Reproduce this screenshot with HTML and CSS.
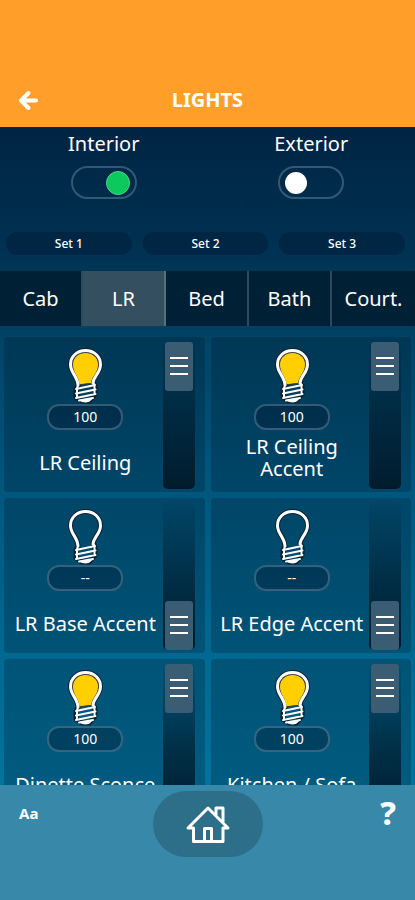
FILE: index.html
```
<!DOCTYPE html>
<html lang="en">
<head>
    <meta charset="UTF-8">
    <meta name="viewport" content="width=device-width, initial-scale=1.0">
    <title>Lights</title>
    <link rel="stylesheet" href="styles.css">
</head>
<body>
    <svg class="sprite" aria-hidden="true">
        <symbol id="bulb" viewBox="0 0 36 56">
            <g fill="none" stroke-linecap="round" stroke-linejoin="round">
                <path stroke="#0b2233" stroke-width="5" d="M11 37 C10.500 28 3.500 25 3.500 16.500 C3.500 8.500 10 2.500 18.500 2.500 C27 2.500 33.500 8.500 33.500 16.500 C33.500 25 26.500 28 26 35 L28 38 V46 L22 53 H15 L9 49 V41 Z"/>
                <path class="glass" d="M12 36.500 C11.500 28 5.500 25 5.500 16.500 C5.500 9.500 11.500 4.500 18.500 4.500 C25.500 4.500 31.500 9.500 31.500 16.500 C31.500 25 25 28 24.500 35 Z"/>
                <path stroke="#fff" stroke-width="3" d="M11 37 C10.500 28 3.500 25 3.500 16.500 C3.500 8.500 10 2.500 18.500 2.500 C27 2.500 33.500 8.500 33.500 16.500 C33.500 25 26.500 28 26 35"/>
                <path stroke="#fff" stroke-width="2" d="M9 41 L28 37 M9 45.500 L28.500 41.500 M9 50 L28.500 46 M12 52.500 L26 50 M11 37 L10 40 M26 35 L28 37 M10 41 V49 M27.500 38 V46"/>
                <path fill="#fff" stroke="#fff" d="M13 52.500 L25 50.500 Q23 54 19 54 Q15 54 13 52.500 Z"/>
            </g>
        </symbol>
    </svg>

    <div class="app">
        <header class="header">
            <button class="back" type="button" aria-label="Back">
                <svg width="22" height="22" viewBox="0 0 22 22" fill="none" stroke="currentColor" stroke-width="4" stroke-linecap="round" stroke-linejoin="round">
                    <path d="M11.500 4 L4 11.500 L11.500 19 M5 11.500 H19"/>
                </svg>
            </button>
            <h1>LIGHTS</h1>
        </header>

        <main class="content">
            <div class="switches">
                <label class="switch">
                    Interior
                    <input type="checkbox" checked>
                </label>
                <label class="switch">
                    Exterior
                    <input type="checkbox">
                </label>
            </div>

            <div class="sets">
                <button type="button">Set 1</button>
                <button type="button">Set 2</button>
                <button type="button">Set 3</button>
            </div>

            <nav class="tabs">
                <button type="button">Cab</button>
                <button type="button" class="active">LR</button>
                <button type="button">Bed</button>
                <button type="button">Bath</button>
                <button type="button">Court.</button>
            </nav>

            <div class="lights">
                <section class="card on">
                    <div class="info">
                        <svg class="bulb"><use href="#bulb"/></svg>
                        <output class="level">100</output>
                        <label class="name" for="light1">LR Ceiling</label>
                    </div>
                    <input class="dimmer" id="light1" type="range" min="0" max="100" value="100">
                </section>
                <section class="card on">
                    <div class="info">
                        <svg class="bulb"><use href="#bulb"/></svg>
                        <output class="level">100</output>
                        <label class="name two-line" for="light2">LR Ceiling Accent</label>
                    </div>
                    <input class="dimmer" id="light2" type="range" min="0" max="100" value="100">
                </section>
                <section class="card">
                    <div class="info">
                        <svg class="bulb"><use href="#bulb"/></svg>
                        <output class="level">--</output>
                        <label class="name" for="light3">LR Base Accent</label>
                    </div>
                    <input class="dimmer" id="light3" type="range" min="0" max="100" value="0">
                </section>
                <section class="card">
                    <div class="info">
                        <svg class="bulb"><use href="#bulb"/></svg>
                        <output class="level">--</output>
                        <label class="name" for="light4">LR Edge Accent</label>
                    </div>
                    <input class="dimmer" id="light4" type="range" min="0" max="100" value="0">
                </section>
                <section class="card on">
                    <div class="info">
                        <svg class="bulb"><use href="#bulb"/></svg>
                        <output class="level">100</output>
                        <label class="name" for="light5">Dinette Sconce</label>
                    </div>
                    <input class="dimmer" id="light5" type="range" min="0" max="100" value="100">
                </section>
                <section class="card on">
                    <div class="info">
                        <svg class="bulb"><use href="#bulb"/></svg>
                        <output class="level">100</output>
                        <label class="name" for="light6">Kitchen / Sofa</label>
                    </div>
                    <input class="dimmer" id="light6" type="range" min="0" max="100" value="100">
                </section>
            </div>
        </main>

        <footer class="footer">
            <button class="text-size" type="button" aria-label="Text size">Aa</button>
            <button class="home" type="button" aria-label="Home">
                <svg width="46" height="40" viewBox="0 0 46 40" fill="none" stroke="currentColor" stroke-width="3" stroke-linejoin="round">
                    <path d="M8.500 24 H3 L23 4 L43 24 H38 V37.500 H8.500 Z"/>
                    <path d="M31 11 V4 H38 V18"/>
                    <path d="M19.500 37 V24.500 H26.500 V37"/>
                </svg>
            </button>
            <button class="help" type="button" aria-label="Help">?</button>
        </footer>
    </div>
</body>
</html>
```

FILE: styles.css
```
:root {
    --orange: #ff9f2a;
    --footer-blue: #3888aa;
    --green: #0bc95c;
    --bulb-yellow: #ffcf00;
    --line: rgba(150, 175, 195, 0.35);
}

* {
    margin: 0;
    padding: 0;
    box-sizing: border-box;
}

body {
    font-family: "Noto Sans", "Open Sans", sans-serif;
    color: #fff;
}

button {
    font-family: inherit;
    color: inherit;
    background: none;
    border: none;
    cursor: pointer;
}

.sprite {
    display: none;
}

.app {
    height: 100vh;
    display: flex;
    flex-direction: column;
}

/* Header */
.header {
    display: grid;
    grid-template-columns: 56px 1fr 56px;
    align-items: center;
    padding: 73px 0 0;
    height: 127px;
    background: var(--orange);
}

.header h1 {
    font-size: 20px;
    line-height: 54px;
    font-weight: 700;
    text-align: center;
}

.back {
    display: flex;
    justify-content: center;
}

/* Content */
.content {
    flex: 1;
    min-height: 0;
    display: flex;
    flex-direction: column;
    background: linear-gradient(#012443, #003151 18%, #004567 34%, #00587f 57%, #006a92 82%, #00739d);
}

.switches {
    display: grid;
    grid-template-columns: 1fr 1fr;
    padding-top: 3px;
}

.switch {
    display: flex;
    flex-direction: column;
    align-items: center;
    gap: 9px;
    font-size: 20px;
    line-height: 27px;
}

.switch input {
    appearance: none;
    display: flex;
    align-items: center;
    width: 66px;
    height: 33px;
    padding: 0 5px;
    border: 2px solid var(--line);
    border-radius: 17px;
    cursor: pointer;
}

.switch input::before {
    content: "";
    width: 22px;
    height: 22px;
    border-radius: 50%;
    background: #fff;
}

.switch input:checked {
    justify-content: flex-end;
}

.switch input:checked::before {
    background: var(--green);
    border: 1px solid #4fd38c;
}

.sets {
    display: grid;
    grid-template-columns: repeat(3, 1fr);
    gap: 11px;
    padding: 33px 10px 16px 6px;
}

.sets button {
    height: 23px;
    border-radius: 12px;
    background: rgba(0, 20, 45, 0.35);
    font-size: 12px;
    font-weight: 500;
}

.tabs {
    display: grid;
    grid-template-columns: repeat(5, 1fr);
    flex: none;
}

.tabs button {
    height: 55px;
    background: #002135;
    border-right: 2px solid #2b4a60;
    font-size: 20px;
}

.tabs button:last-child {
    border-right: none;
}

.tabs .active {
    background: #344f60;
    border-right-color: #56707f;
}

/* Light cards */
.lights {
    flex: 1;
    min-height: 0;
    overflow-y: auto;
    scrollbar-width: none;
    display: grid;
    grid-template-columns: 1fr 1fr;
    grid-auto-rows: 155px;
    gap: 6px;
    margin-top: 11px;
    padding: 0 4px;
}

.card {
    display: flex;
    padding: 5px 10px 3px 4px;
    border-radius: 4px;
    background: rgba(0, 20, 40, 0.25);
}

.info {
    flex: 1;
    display: flex;
    flex-direction: column;
    align-items: center;
    padding-top: 6px;
}

.bulb {
    flex: none;
    width: 36px;
    height: 56px;
    --glass: none;
    --glass-edge: none;
}

.on .bulb {
    --glass: var(--bulb-yellow);
    --glass-edge: #3b3a35;
}

.glass {
    fill: var(--glass);
    stroke: var(--glass-edge);
}

.level {
    flex: none;
    width: 76px;
    height: 26px;
    border: 2px solid var(--line);
    border-radius: 12px;
    background: rgba(0, 20, 45, 0.35);
    font-size: 14px;
    line-height: 22px;
    text-align: center;
}

.name {
    flex: 1;
    display: flex;
    align-items: center;
    padding-top: 6px;
    font-size: 20px;
    line-height: 22px;
    text-align: center;
}

.two-line {
    align-items: flex-start;
}

.dimmer {
    appearance: none;
    writing-mode: vertical-lr;
    direction: rtl;
    width: 32px;
    height: 147px;
    padding: 0 2px;
    border-radius: 5px;
    background: linear-gradient(rgba(0, 20, 40, 0.05), rgba(0, 27, 44, 0.6) 50%, #001c2c);
    cursor: pointer;
}

.dimmer::-webkit-slider-thumb {
    appearance: none;
    width: 28px;
    height: 49px;
    border-radius: 3px;
    background:
        linear-gradient(#fff, #fff) 50% 15px / 18px 2px no-repeat,
        linear-gradient(#fff, #fff) 50% 23px / 18px 2px no-repeat,
        linear-gradient(#fff, #fff) 50% 31px / 18px 2px no-repeat,
        #3a5d73;
}

/* Footer */
.footer {
    flex: none;
    height: 115px;
    display: grid;
    grid-template-columns: 1fr 110px 1fr;
    align-items: start;
    padding: 6px 19px;
    background: var(--footer-blue);
}

.text-size {
    justify-self: start;
    font-size: 15px;
    font-weight: 700;
    line-height: 44px;
}

.home {
    display: flex;
    align-items: center;
    justify-content: center;
    height: 66px;
    border-radius: 33px;
    background: #2d6f89;
}

.help {
    justify-self: end;
    font-size: 32px;
    font-weight: 800;
    line-height: 44px;
}
```
